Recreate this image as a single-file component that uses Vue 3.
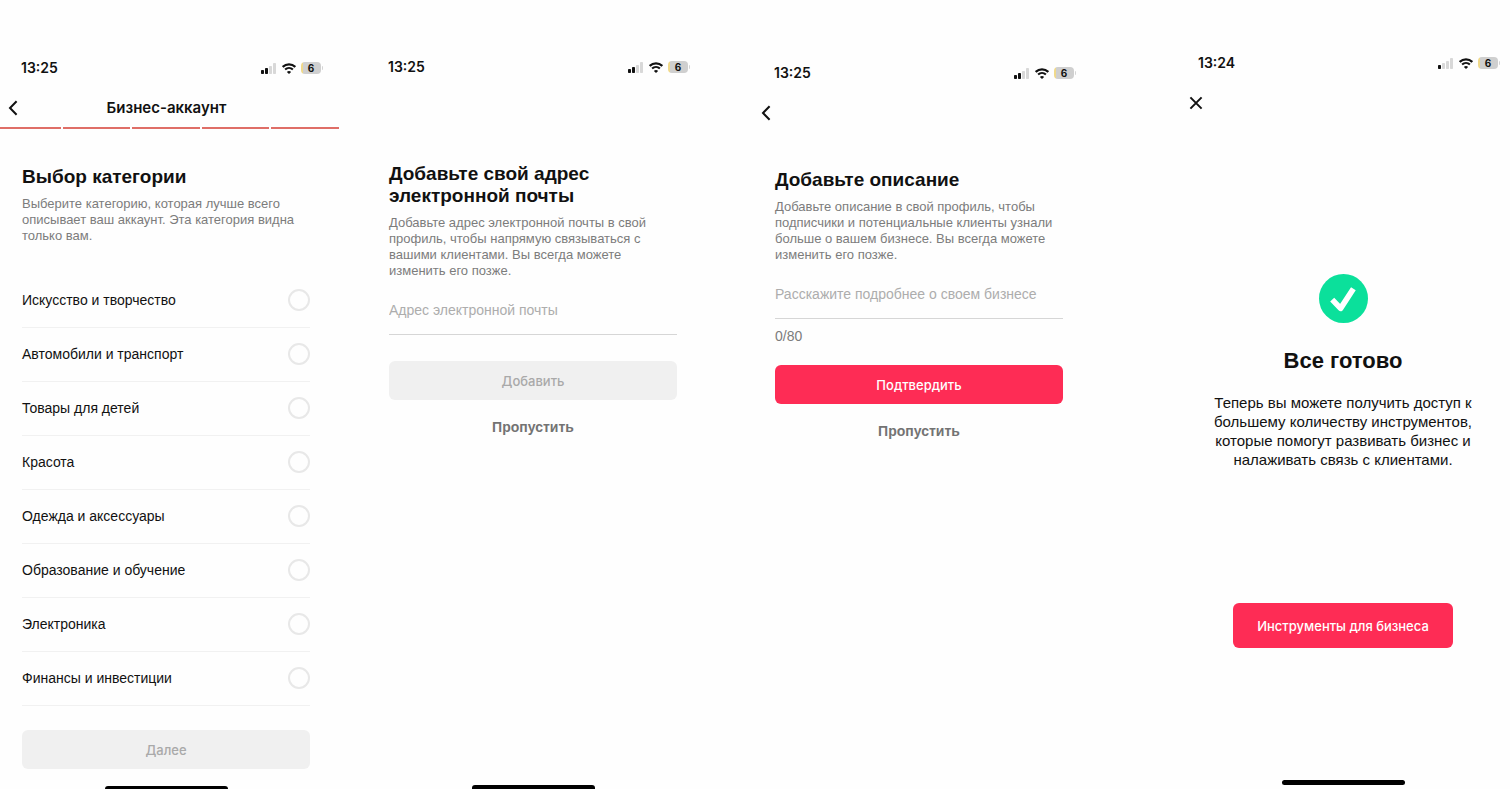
<script setup>
import { ref } from 'vue'

const categories = [
  'Искусство и творчество',
  'Автомобили и транспорт',
  'Товары для детей',
  'Красота',
  'Одежда и аксессуары',
  'Образование и обучение',
  'Электроника',
  'Финансы и инвестиции',
]

const screens = [
  { id: 'category', time: '13:25', bars: 2 },
  { id: 'email', time: '13:25', bars: 2 },
  { id: 'about', time: '13:25', bars: 2 },
  { id: 'done', time: '13:24', bars: 1 },
]

const signalBars = [
  { x: 0, y: 7, h: 4 },
  { x: 4, y: 5, h: 6 },
  { x: 8, y: 3, h: 8 },
  { x: 12, y: 0, h: 11 },
]

const category = ref('')
const email = ref('')
const about = ref('')
</script>

<template>
  <main class="board">
    <section v-for="s in screens" :key="s.id" class="screen" :class="'screen--' + s.id">
      <div class="status">
        <span class="status__time">{{ s.time }}</span>
        <div class="status__icons">
          <svg class="status__signal" viewBox="0 0 15 11" aria-hidden="true">
            <rect v-for="(b, i) in signalBars" :key="i" :x="b.x" :y="b.y" width="3" :height="b.h" rx="0.8"
              :fill="i < s.bars ? '#111' : '#d8d8d8'" />
          </svg>
          <svg class="status__wifi" viewBox="0 0 14 11" fill="none" aria-hidden="true">
            <path d="M.7 3.9C4.3 .4 9.7 .4 13.3 3.9" stroke="#111" stroke-width="2.2" />
            <path d="M3.1 6.5c2.2-2.1 5.6-2.1 7.8 0" stroke="#111" stroke-width="2" />
            <path d="M7 11 4.9 8.9c1.2-1.1 3-1.1 4.2 0z" fill="#111" />
          </svg>
          <span class="battery">6</span>
        </div>
      </div>

      <template v-if="s.id === 'category'">
        <header class="nav">
          <button class="nav__button" type="button" aria-label="Назад">
            <svg class="chevron" viewBox="0 0 10 16" aria-hidden="true"><path d="M8.6 1.2 2 8l6.6 6.8" /></svg>
          </button>
          <h1 class="nav__title">Бизнес-аккаунт</h1>
        </header>
        <div class="progress"><i v-for="n in 5" :key="n"></i></div>
        <div class="content">
          <h2 class="heading">Выбор категории</h2>
          <p class="description">Выберите категорию, которая лучше всего<br>описывает ваш аккаунт. Эта категория видна<br>только вам.</p>
          <div class="options" role="radiogroup" aria-label="Выбор категории">
            <label v-for="c in categories" :key="c" class="option">
              <span>{{ c }}</span>
              <input v-model="category" class="option__radio" type="radio" name="category" :value="c">
            </label>
          </div>
          <button class="button button--muted" type="button">Далее</button>
        </div>
      </template>

      <template v-else-if="s.id === 'email'">
        <div class="content">
          <h2 class="heading">Добавьте свой адрес<br>электронной почты</h2>
          <p class="description">Добавьте адрес электронной почты в свой<br>профиль, чтобы напрямую связываться с<br>вашими клиентами. Вы всегда можете<br>изменить его позже.</p>
          <input v-model="email" class="field" type="email" aria-label="Адрес электронной почты" placeholder="Адрес электронной почты">
          <button class="button button--muted" type="button">Добавить</button>
          <button class="skip" type="button">Пропустить</button>
        </div>
      </template>

      <template v-else-if="s.id === 'about'">
        <header class="nav">
          <button class="nav__button" type="button" aria-label="Назад">
            <svg class="chevron" viewBox="0 0 10 16" aria-hidden="true"><path d="M8.6 1.2 2 8l6.6 6.8" /></svg>
          </button>
        </header>
        <div class="content">
          <h2 class="heading">Добавьте описание</h2>
          <p class="description">Добавьте описание в свой профиль, чтобы<br>подписчики и потенциальные клиенты узнали<br>больше о вашем бизнесе. Вы всегда можете<br>изменить его позже.</p>
          <input v-model="about" class="field" type="text" maxlength="80" aria-label="Описание бизнеса" placeholder="Расскажите подробнее о своем бизнесе">
          <div class="counter">{{ about.length }}/80</div>
          <button class="button button--primary" type="button">Подтвердить</button>
          <button class="skip" type="button">Пропустить</button>
        </div>
      </template>

      <template v-else>
        <header class="nav">
          <button class="nav__button nav__button--close" type="button" aria-label="Закрыть">
            <svg class="cross" viewBox="0 0 14 14" aria-hidden="true"><path d="M1.4 1.4l11.2 11.2M12.6 1.4 1.4 12.6" /></svg>
          </button>
        </header>
        <div class="content">
          <svg class="check" viewBox="0 0 49 49" fill="none" aria-hidden="true">
            <circle cx="24.5" cy="24.5" r="24.5" fill="#0be09b" />
            <path d="M13.2 25.6 21.6 34.4 34.4 14.8" stroke="#fff" stroke-width="5.6" stroke-linejoin="round" />
          </svg>
          <h2 class="result">Все готово</h2>
          <p class="summary">Теперь вы можете получить доступ к<br>большему количеству инструментов,<br>которые помогут развивать бизнес и<br>налаживать связь с клиентами.</p>
          <button class="button button--primary" type="button">Инструменты для бизнеса</button>
        </div>
      </template>

      <div v-if="s.id !== 'about'" class="home"></div>
    </section>
  </main>
</template>

<style>
body {
  margin: 0;
  background: #fefefe;
}
</style>

<style scoped>
.board {
  box-sizing: border-box;
  display: grid;
  grid-template-columns: 333fr 34fr 333fr 53fr 333fr 91fr 333fr;
  min-height: 100vh;
  color: #111;
  font-family: "Liberation Sans", Arial, sans-serif;
  font-size: 14px;
}

.screen {
  display: flex;
  flex-direction: column;
  min-width: 0;
}

.screen--category { grid-column: 1; padding-top: 58px; }
.screen--email { grid-column: 3; padding-top: 57px; }
.screen--about { grid-column: 5; padding-top: 63px; }
.screen--done { grid-column: 7; padding-top: 53px; }

.status {
  display: flex;
  align-items: center;
  justify-content: space-between;
  height: 20px;
  padding: 0 10px 0 21px;
}

.status__time {
  font: 600 14px/20px Inter, sans-serif;
}

.status__icons {
  display: flex;
  align-items: center;
}

.status__signal {
  width: 15px;
  height: 11px;
  margin-right: 6px;
}

.status__wifi {
  width: 14px;
  height: 11px;
  margin-right: 5px;
}

.battery {
  position: relative;
  box-sizing: border-box;
  width: 20px;
  height: 12px;
  margin-right: 2px;
  border-radius: 4px;
  background: linear-gradient(to right, #f0d98a 2px, #cfcfcf 2px);
  font: 700 10px/12px Inter, sans-serif;
  text-align: center;
}

.battery::after {
  content: "";
  position: absolute;
  top: 4px;
  left: 21px;
  width: 1px;
  height: 4px;
  border-radius: 0 1px 1px 0;
  background: #d4d4d4;
}

.nav {
  position: relative;
  display: flex;
  align-items: center;
  justify-content: center;
  height: 24px;
  margin-top: 18px;
}

.nav__button {
  position: absolute;
  top: 0;
  left: 0;
  display: flex;
  align-items: center;
  height: 24px;
  padding: 0 8px;
  border: 0;
  background: none;
}

.nav__button--close {
  padding: 0 12px;
}

.nav__title {
  margin: 0;
  font: 600 15px/24px Inter, sans-serif;
}

.chevron {
  width: 10px;
  height: 16px;
}

.cross {
  width: 14px;
  height: 14px;
}

.chevron path,
.cross path {
  fill: none;
  stroke: #111;
  stroke-width: 2;
}

.progress {
  display: grid;
  grid-template-columns: 61fr 68fr 68fr 68fr 68fr;
  gap: 2px;
  height: 2px;
  margin: 7px -6px 0 0;
}

.progress i {
  background: #df6e67;
}

.content {
  display: flex;
  flex-direction: column;
  padding: 0 23px 0 22px;
}

.heading {
  margin: 37px 0 0;
  font-size: 19px;
  line-height: 22px;
  white-space: nowrap;
}

.screen--email .heading { margin-top: 86px; }
.screen--about .heading { margin-top: 44px; }

.description {
  margin: 8px 0 0;
  color: #7c7c7c;
  font-size: 13px;
  line-height: 16px;
  white-space: nowrap;
}

.options {
  margin-top: 30px;
}

.option {
  box-sizing: border-box;
  display: flex;
  align-items: center;
  justify-content: space-between;
  height: 54px;
  padding-bottom: 1px;
  border-bottom: 1px solid #f1f1f1;
}

.option__radio {
  box-sizing: border-box;
  width: 22px;
  height: 22px;
  margin: 0;
  border: 2px solid #e8e8e8;
  border-radius: 50%;
  appearance: none;
}

.option__radio:checked {
  border: 6px solid #fe2c55;
}

.button {
  height: 39px;
  padding: 0;
  border: 0;
  border-radius: 6px;
  font: 500 13px/20px Inter, sans-serif;
}

.button--muted {
  background: #f0f0f0;
  color: #a9a9a9;
}

.button--primary {
  background: #fe2c55;
  color: #fff;
}

.screen--category .button { margin-top: 24px; }
.screen--email .button { margin-top: 26px; }
.screen--about .button { margin-top: 21px; }

.skip {
  align-self: center;
  height: 20px;
  margin-top: 17px;
  padding: 0;
  border: 0;
  background: none;
  color: #737373;
  font: 700 14px/20px "Liberation Sans", Arial, sans-serif;
}

.field {
  box-sizing: border-box;
  width: 100%;
  height: 48px;
  margin-top: 8px;
  padding: 0 0 2px;
  border: 0;
  border-bottom: 1px solid #d6d6d6;
  outline: 0;
  background: none;
  color: #111;
  font: 14px/20px "Liberation Sans", Arial, sans-serif;
}

.field::placeholder {
  color: #adadad;
  opacity: 1;
}

.counter {
  margin-top: 9px;
  color: #7c7c7c;
  line-height: 16px;
}

.screen--done .content {
  align-items: center;
}

.check {
  width: 49px;
  height: 49px;
  margin-top: 159px;
}

.result {
  margin: 24px 0 0;
  font-size: 22px;
  line-height: 28px;
}

.summary {
  margin: 18px 0 0;
  font-size: 15px;
  line-height: 19px;
  text-align: center;
  white-space: nowrap;
}

.screen--done .button {
  height: 45px;
  margin-top: 134px;
  padding: 0 24px;
}

.home {
  align-self: center;
  width: 123px;
  height: 3px;
  margin-top: auto;
  border-radius: 3px 3px 0 0;
  background: #000;
}

.screen--email .home {
  height: 4px;
}

.screen--done .home {
  height: 5px;
  margin-bottom: 4px;
  border-radius: 3px;
}
</style>
